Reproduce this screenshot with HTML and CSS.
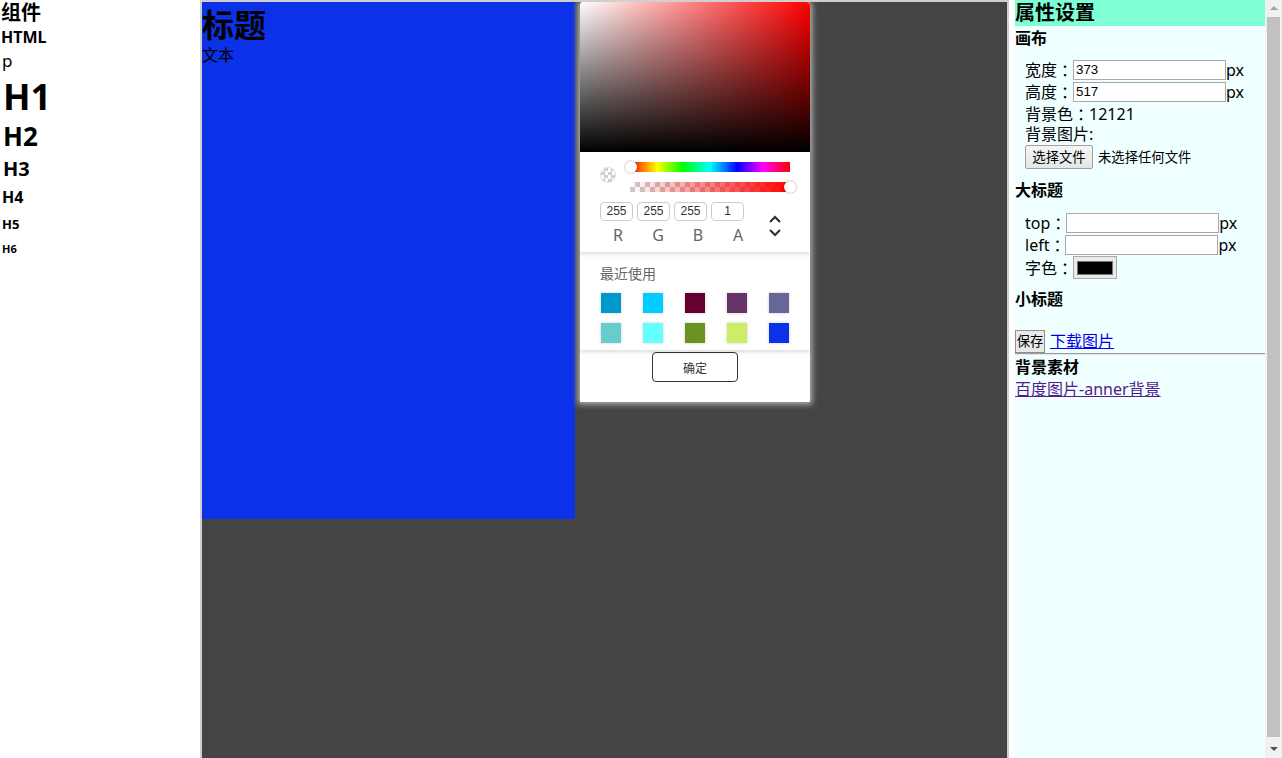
FILE: index.html
```html
<!DOCTYPE html>
<html lang="zh-CN">
<head>
<meta charset="utf-8">
<title>编辑器</title>
<link rel="stylesheet" href="styles.css">
</head>
<body>
  <aside class="components">
    <div class="c-title">组件</div>
    <div class="c-html">HTML</div>
    <div class="c-p">p</div>
    <div class="c-h1">H1</div>
    <div class="c-h2">H2</div>
    <div class="c-h3">H3</div>
    <div class="c-h4">H4</div>
    <div class="c-h5">H5</div>
    <div class="c-h6">H6</div>
  </aside>

  <main class="stage">
    <div class="canvas">
      <h1 class="canvas-title">标题</h1>
      <p class="canvas-text">文本</p>
    </div>

    <div class="picker">
      <div class="sat"></div>
      <div class="pk-section pk-controls">
        <div class="slider-row">
          <span class="alpha-icon"></span>
          <div class="sliders">
            <div class="hue"><span class="knob knob-left"></span></div>
            <div class="alpha"><span class="knob knob-right"></span></div>
          </div>
        </div>
        <div class="values-wrap">
          <div class="values-col">
            <div class="values-row">
              <span class="val-box">255</span>
              <span class="val-box">255</span>
              <span class="val-box">255</span>
              <span class="val-box">1</span>
            </div>
            <div class="labels-row">
              <span class="val-label">R</span>
              <span class="val-label">G</span>
              <span class="val-label">B</span>
              <span class="val-label">A</span>
            </div>
          </div>
          <div class="chevrons">
            <svg width="14" height="8" viewBox="0 0 14 8"><polyline points="2,7 7,2 12,7" fill="none" stroke="#333" stroke-width="2.2"/></svg>
            <svg width="14" height="8" viewBox="0 0 14 8"><polyline points="2,1 7,6 12,1" fill="none" stroke="#333" stroke-width="2.2"/></svg>
          </div>
        </div>
      </div>
      <div class="pk-section pk-recent">
        <div class="recent-label">最近使用</div>
        <div class="swatches">
          <span class="sw" style="background:#0099cc"></span>
          <span class="sw" style="background:#00ccff"></span>
          <span class="sw" style="background:#660033"></span>
          <span class="sw" style="background:#663366"></span>
          <span class="sw" style="background:#666699"></span>
          <span class="sw" style="background:#66cccc"></span>
          <span class="sw" style="background:#66ffff"></span>
          <span class="sw" style="background:#6b921f"></span>
          <span class="sw" style="background:#ccee66"></span>
          <span class="sw" style="background:#0b31e9"></span>
        </div>
      </div>
      <div class="pk-footer">
        <button class="ok-btn">确定</button>
      </div>
    </div>
  </main>

  <aside class="props">
    <div class="props-head">属性设置</div>
    <div class="sec-title sec-canvas">画布</div>
    <div class="row r1">宽度<span class="fw">：</span><span class="txt-input">373</span>px</div>
    <div class="row r2">高度<span class="fw">：</span><span class="txt-input">517</span>px</div>
    <div class="row r3">背景色<span class="fw">：</span>12121</div>
    <div class="row r4">背景图片:</div>
    <div class="row r5"><span class="btn file-btn">选择文件</span><span class="file-none">未选择任何文件</span></div>
    <div class="sec-title sec-big">大标题</div>
    <div class="row r6">top<span class="fw">：</span><span class="txt-input"></span>px</div>
    <div class="row r7">left<span class="fw">：</span><span class="txt-input"></span>px</div>
    <div class="row r8">字色<span class="fw">：</span><span class="color-input"><span class="color-swatch"></span></span></div>
    <div class="sec-title sec-small">小标题</div>
    <div class="save-row"><span class="btn save-btn">保存</span><a class="link" href="#">下载图片</a></div>
    <div class="rule"></div>
    <div class="sec-title sec-bg">背景素材</div>
    <div class="bg-link"><a class="visited" href="#">百度图片-anner背景</a></div>
  </aside>

  <div class="scrollbar">
    <span class="sb-up"></span>
    <span class="sb-thumb"></span>
    <span class="sb-down"></span>
  </div>
</body>
</html>
```

FILE: styles.css
```css
* { box-sizing: border-box; }
html, body { margin: 0; padding: 0; }
body {
  display: flex;
  height: 758px;
  overflow: hidden;
  font-family: "Noto Sans", "Noto Sans CJK SC", sans-serif;
  color: #000;
  background: #fff;
}

/* left components */
.components {
  width: 200px;
  flex: none;
  padding-left: 1px;
  font-weight: bold;
}
.components div { white-space: nowrap; }
.c-title { font-size: 20px; line-height: 26px; }
.c-html { font-size: 16px; line-height: 22px; }
.c-p { font-size: 17px; line-height: 22px; font-weight: normal; margin-top: 2px; padding-left: 1px; }
.c-h1 { font-size: 36px; line-height: 50px; padding-left: 2px; }
.c-h2 { font-size: 26px; line-height: 28px; padding-left: 2px; }
.c-h3 { font-size: 20px; line-height: 38px; padding-left: 2px; }
.c-h4 { font-size: 16px; line-height: 18px; padding-left: 1px; }
.c-h5 { font-size: 13px; line-height: 36px; padding-left: 1px; }
.c-h6 { font-size: 11px; line-height: 14px; padding-left: 1px; }

/* center stage */
.stage {
  position: relative;
  width: 809px;
  flex: none;
  height: 770px;
  margin-right: 6px;
  background: #444;
  border: 2px solid #cfcfcf;
  border-bottom: none;
}
.canvas {
  width: 373px;
  height: 517px;
  background: #0b31e9;
}
.canvas-title {
  margin: 0;
  font-size: 32px;
  line-height: 46px;
  font-weight: bold;
}
.canvas-text {
  margin: 0;
  font-size: 16px;
  line-height: 14px;
}

/* color picker overlay */
.picker {
  position: absolute;
  left: 378px;
  top: 0;
  width: 230px;
  height: 400px;
  background: #fff;
  border-radius: 4px 4px 0 0;
  box-shadow: 0 0 6px 2px rgba(210, 210, 210, 0.85);
}
.sat {
  height: 150px;
  border-radius: 4px 4px 0 0;
  background:
    linear-gradient(to top, #000 0%, rgba(0,0,0,0) 100%),
    linear-gradient(to right, #fff 0%, #f00 100%);
}
.pk-section {
  position: relative;
  background: #fff;
  box-shadow: 0 2px 4px rgba(0, 0, 0, 0.14);
}
.pk-controls {
  height: 100px;
  padding: 10px 20px 0 20px;
  z-index: 2;
}
.slider-row {
  display: flex;
  align-items: flex-start;
  gap: 14px;
}
.alpha-icon {
  width: 16px;
  height: 16px;
  margin-top: 5px;
  border-radius: 50%;
  border: 1px solid #ddd;
  background: conic-gradient(#d0d0d0 25%, #fff 0 50%, #d0d0d0 0 75%, #fff 0) 0 0 / 7px 7px;
}
.sliders {
  display: flex;
  flex-direction: column;
  gap: 10px;
  width: 160px;
}
.hue, .alpha {
  position: relative;
  height: 10px;
}
.hue {
  background: linear-gradient(to right, #f00 0%, #ff0 17%, #0f0 33%, #0ff 50%, #00f 67%, #f0f 83%, #f00 100%);
}
.alpha {
  background:
    linear-gradient(to right, rgba(255,0,0,0) 0%, #f00 100%),
    conic-gradient(#ccc 25%, #fff 0 50%, #ccc 0 75%, #fff 0) 0 0 / 10px 10px;
}
.knob {
  position: absolute;
  top: -1px;
  width: 12px;
  height: 12px;
  border-radius: 50%;
  background: #fff;
  box-shadow: 0 0 2px rgba(0, 0, 0, 0.45);
}
.knob-left { left: -5px; }
.knob-right { right: -6px; }

.values-wrap {
  display: flex;
  align-items: flex-start;
  margin-top: 10px;
}
.values-col {
  display: flex;
  flex-direction: column;
}
.values-row {
  display: flex;
  gap: 4px;
}
.val-box {
  width: 33px;
  height: 19px;
  border: 1px solid #ccc;
  border-radius: 4px;
  font-family: "Liberation Sans", Arial, sans-serif;
  font-size: 12px;
  line-height: 17px;
  text-align: center;
  color: #333;
}
.labels-row {
  display: flex;
  margin-left: -2px;
  margin-top: 3px;
}
.val-label {
  width: 40px;
  text-align: center;
  font-size: 16px;
  line-height: 22px;
  color: #666;
}
.chevrons {
  display: flex;
  flex-direction: column;
  gap: 6px;
  margin-left: 10px;
  margin-top: 13px;
}
.chevrons svg { display: block; }

.pk-recent {
  height: 98px;
  padding: 12px 20px 0 20px;
  z-index: 1;
}
.recent-label {
  font-size: 14px;
  line-height: 20px;
  color: #666;
}
.swatches {
  display: grid;
  grid-template-columns: repeat(5, 20px);
  column-gap: 22px;
  row-gap: 10px;
  margin-top: 9px;
  padding-left: 1px;
}
.sw {
  width: 20px;
  height: 20px;
  box-shadow: 0 0 3px rgba(0, 0, 0, 0.2);
}
.pk-footer {
  display: flex;
  justify-content: center;
  padding-top: 2px;
}
.ok-btn {
  width: 86px;
  height: 30px;
  border: 1px solid #333;
  border-radius: 4px;
  background: #fff;
  font-family: "Noto Sans CJK SC", sans-serif;
  font-size: 12px;
  color: #333;
  padding: 0;
}

/* right properties panel */
.props {
  width: 250px;
  flex: none;
  background: #f0ffff;
  font-size: 16px;
}
.props-head {
  height: 26px;
  line-height: 26px;
  font-size: 20px;
  font-weight: bold;
  background: #7fffd4;
}
.sec-title {
  font-weight: bold;
  font-size: 16px;
  line-height: 22px;
}
.sec-canvas { line-height: 24px; }
.row {
  display: flex;
  align-items: center;
  padding-left: 10px;
  line-height: 20px;
  white-space: nowrap;
}
.fw { font-family: "Noto Sans CJK TC", "Noto Sans CJK JP", sans-serif; }
.r1 { margin-top: 9px; height: 22px; }
.r2 { height: 22px; }
.r3 { height: 21px; }
.r4 { height: 20px; }
.r5 { height: 25px; }
.sec-big { margin-top: 10px; }
.r6 { margin-top: 11px; height: 22px; }
.r7 { height: 22px; }
.r8 { height: 23px; margin-bottom: 9px; }
.txt-input {
  display: inline-block;
  width: 153px;
  height: 20px;
  border: 1px solid #a9a9a9;
  background: #fff;
  font-family: "Liberation Sans", Arial, sans-serif;
  font-size: 13.33px;
  line-height: 18px;
  padding-left: 2px;
}
.btn {
  display: inline-block;
  border: 1px solid #a0a0a0;
  border-radius: 2px;
  background: linear-gradient(#f5f5f5, #e6e6e6);
  font-size: 13.33px;
  text-align: center;
}
.file-btn {
  width: 68px;
  height: 24px;
  line-height: 22px;
}
.file-none {
  margin-left: 5px;
  font-size: 13.33px;
}
.color-input {
  display: inline-flex;
  align-items: center;
  justify-content: center;
  width: 44px;
  height: 23px;
  border: 1px solid #a9a9a9;
  background: #e9e9e9;
}
.color-swatch {
  width: 36px;
  height: 14px;
  background: #000;
  border: 1px solid #777;
}
.save-row {
  margin-top: 20px;
  height: 23px;
  display: flex;
  align-items: flex-start;
  gap: 5px;
  white-space: nowrap;
}
.save-btn {
  width: 30px;
  height: 23px;
  line-height: 21px;
  border-color: #8f8f8f;
  background: #e9e9e9;
  border-radius: 0;
}
.link {
  color: #0000ee;
  text-decoration: underline;
  line-height: 22px;
}
.rule {
  height: 2px;
  border-top: 1px solid #9a9a9a;
  border-bottom: 1px solid #e6e6e6;
}
.sec-bg { margin-top: 1px; }
.bg-link { line-height: 22px; }
.visited { color: #551a8b; text-decoration: underline; }

/* scrollbar */
.scrollbar {
  width: 17px;
  flex: none;
  background: #f1f1f1;
  display: flex;
  flex-direction: column;
  align-items: center;
}
.sb-up, .sb-down {
  width: 0;
  height: 0;
  border-left: 4px solid transparent;
  border-right: 4px solid transparent;
}
.sb-up {
  margin-top: 6px;
  border-bottom: 4px solid #a3a3a3;
}
.sb-thumb {
  width: 13px;
  height: 720px;
  margin-top: 7px;
  background: #c1c1c1;
}
.sb-down {
  margin-top: 10px;
  border-top: 4px solid #505050;
}
```
